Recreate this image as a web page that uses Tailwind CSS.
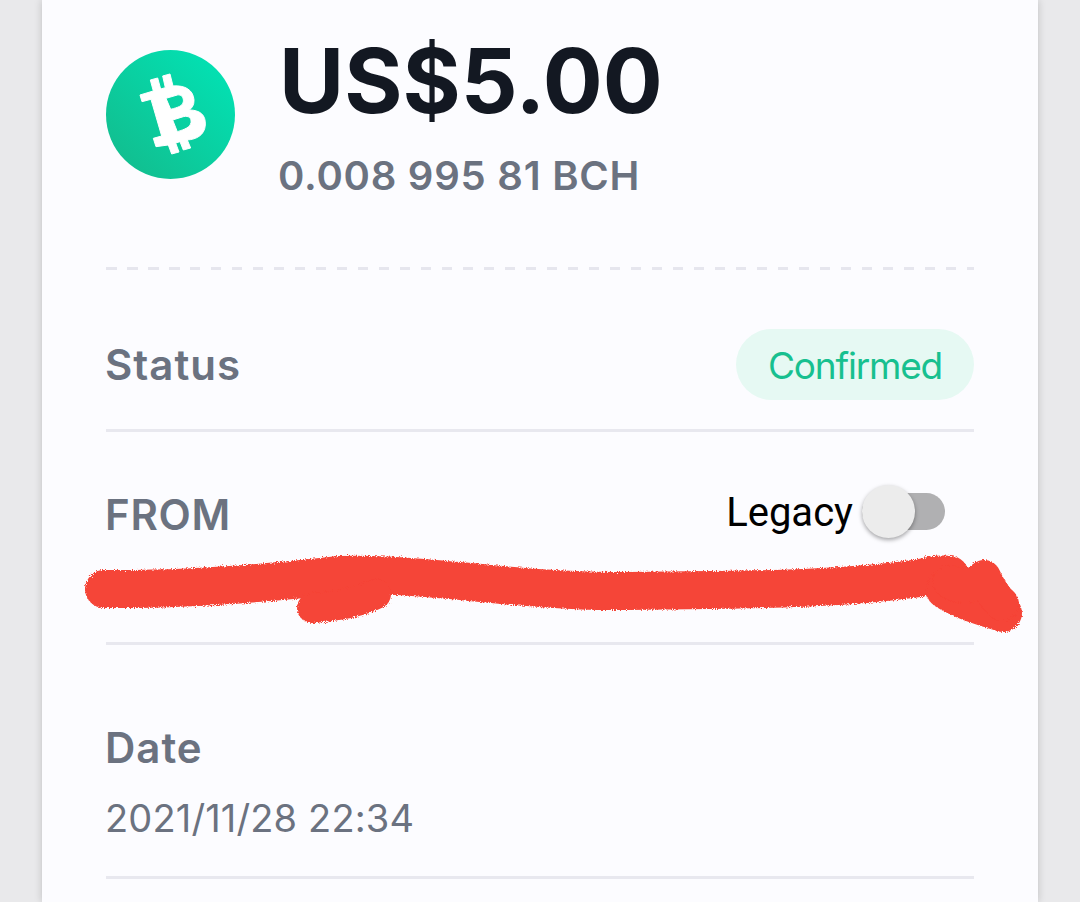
<!DOCTYPE html>
<html lang="en">
<head>
  <meta charset="UTF-8" />
  <title>Transaction</title>
  <script src="https://cdn.jsdelivr.net/npm/@tailwindcss/browser@4"></script>
</head>
<body class="h-[902px] overflow-hidden bg-[#e9e9eb] font-['Inter',sans-serif]">
  <!-- Card -->
  <main class="relative mx-[42px] h-[902px] bg-[#fcfcff] px-[64px] shadow-[0_0_8px_rgba(0,0,0,0.18)]">
    <!-- Amount -->
    <section class="flex h-[267px]">
      <svg class="mt-[50px] h-[129px] w-[129px] shrink-0" viewBox="0 0 129 129">
        <defs>
          <linearGradient id="bch" x1="0" y1="1" x2="1" y2="0">
            <stop offset="0" stop-color="#14b98a" />
            <stop offset="1" stop-color="#00e6b8" />
          </linearGradient>
        </defs>
        <circle cx="64.5" cy="64.5" r="64.5" fill="url(#bch)" />
        <path transform="translate(-16 -20) scale(0.3333)" fill="#fff" stroke="#fff" stroke-width="3" stroke-linejoin="round" fill-rule="evenodd" d="M150 195 L190 183 L181 150 L203 144 L212 177 L226 173 L218 138 L240 132 L249 168 C285 165 310 180 312 210 C313 225 305 235 298 240 C330 240 348 255 346 285 C344 315 320 328 292 330 L302 354 L280 360 L270 335 L257 339 L267 366 L245 372 L235 345 L198 350 L190 325 L215 318 L183 208 L156 215 Z M228 205 L262 195 C275 192 282 205 280 215 C278 228 265 232 242 238 Z M248 270 L280 260 C297 256 305 265 303 278 C300 292 285 298 262 305 Z" />
      </svg>
      <div class="ml-[44px]">
        <h1 class="mt-[26px] h-[110px] text-[89px] leading-[110px] font-bold text-[#131822]">US$5.00</h1>
        <p class="mt-[18px] -ml-[1px] text-[40px] leading-[44px] font-semibold tracking-[0.75px] text-[#6b7280]">0.008 995 81 BCH</p>
      </div>
    </section>
    <div class="h-[3px] bg-[repeating-linear-gradient(90deg,#e6e6ee_0_10.5px,transparent_10.5px_21px)]"></div>
    <!-- Status -->
    <section class="flex h-[162px] items-center justify-between border-b-[3px] border-[#e8e8ef] pt-[30px]">
      <span class="-ml-[1px] text-[42px] font-semibold tracking-[1px] text-[#6b7280]">Status</span>
      <span class="flex h-[71px] w-[238px] items-center justify-center rounded-[36px] bg-[#e6f9f3] pt-[2px] text-[37px] tracking-[-1.2px] text-[#17c08f]">Confirmed</span>
    </section>
    <!-- From -->
    <section class="h-[213px] border-b-[3px] border-[#e8e8ef]">
      <div class="flex h-[160px] items-start justify-between pt-[58px]">
        <span class="-ml-[1px] text-[42px] leading-[50px] font-semibold tracking-[0.75px] text-[#6b7280]">FROM</span>
        <div class="mr-[29px] flex items-center">
          <span class="font-['Roboto',sans-serif] text-[40px] leading-[46px] text-black">Legacy</span>
          <span class="relative ml-[9px] -mt-[4px] h-[37px] w-[83px] rounded-full bg-[#b0b0b2]">
            <span class="absolute top-[-8px] left-0 h-[53px] w-[53px] rounded-full bg-[#ececec] shadow-[0_2px_4px_rgba(0,0,0,0.35)]"></span>
          </span>
        </div>
      </div>
    </section>
    <!-- Date -->
    <section class="h-[234px] border-b-[3px] border-[#e8e8ef] pt-[78px]">
      <p class="-ml-[1px] text-[42px] leading-[50px] font-semibold tracking-[1px] text-[#6b7280]">Date</p>
      <p class="mt-[23px] -ml-[1px] text-[38px] leading-[44px] tracking-[0.15px] text-[#6b7280]">2021/11/28 22:34</p>
    </section>
  </main>
  <!-- Red marker scribble drawn over the address -->
  <svg class="absolute top-0 left-0 h-[902px] w-[1080px]" viewBox="0 0 1080 902" fill="none" stroke="#f54437" stroke-linecap="round" stroke-linejoin="round">
    <defs>
      <filter id="marker" filterUnits="userSpaceOnUse" x="60" y="530" width="1000" height="120">
        <feTurbulence type="fractalNoise" baseFrequency="0.9" numOctaves="2" seed="3" />
        <feDisplacementMap in="SourceGraphic" scale="5" />
      </filter>
    </defs>
    <g filter="url(#marker)">
      <path stroke-width="38" d="M104 589 C180 590 260 584 340 575 C420 572 520 592 620 591 C720 589 820 592 920 578 C935 574 945 574 950 575" />
      <path stroke-width="30" d="M312 608 C340 606 360 602 376 594" />
      <path stroke-width="38" d="M945 590 C960 600 980 606 1003 613" />
      <path stroke-width="34" d="M950 582 C965 590 975 585 984 577 C990 590 995 598 1002 604" />
    </g>
  </svg>
</body>
</html>
